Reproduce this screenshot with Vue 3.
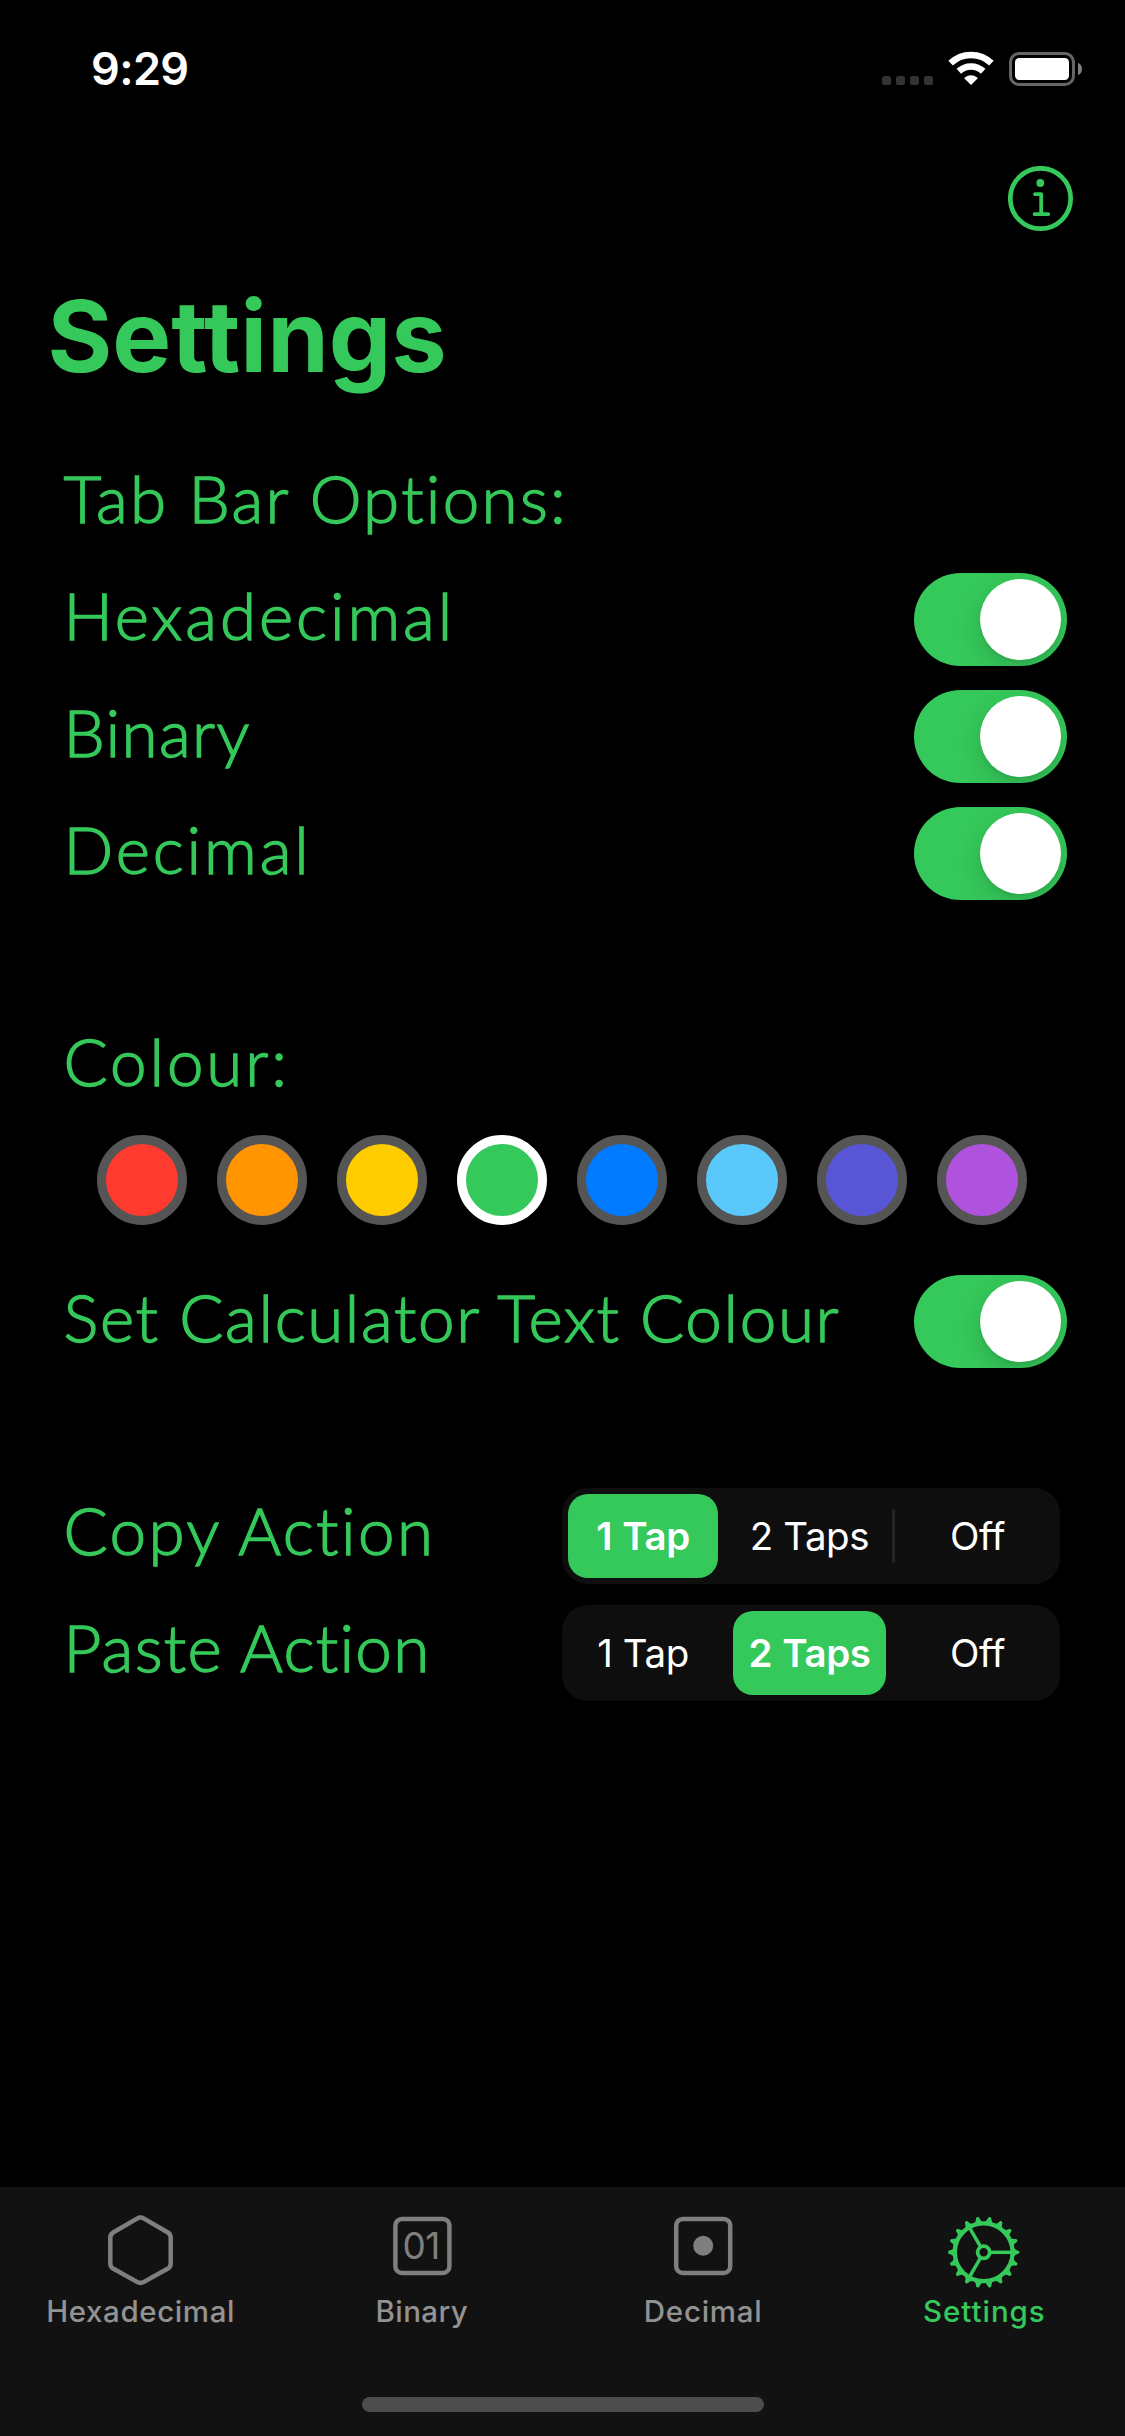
<script setup>
import { ref } from 'vue'

const tabOptions = ref([
  { label: 'Hexadecimal', spacing: 2.95, on: true },
  { label: 'Binary', spacing: 1.4, on: true },
  { label: 'Decimal', spacing: 2.9, on: true },
])

const colours = ['#ff3b30', '#ff9500', '#ffcc00', '#35c85a', '#007aff', '#5ac8fa', '#5856d6', '#af52de']
const selectedColour = ref(3)
const textColourOn = ref(true)

const choices = ['1 Tap', '2 Taps', 'Off']
const actions = ref([
  { label: 'Copy Action', spacing: 2.45, selected: 0 },
  { label: 'Paste Action', spacing: 1.35, selected: 1 },
])

const tabs = [
  { id: 'hex', label: 'Hexadecimal', spacing: 0.6 },
  { id: 'bin', label: 'Binary', spacing: 0.4 },
  { id: 'dec', label: 'Decimal', spacing: 0.75 },
  { id: 'set', label: 'Settings', spacing: 0.95 },
]
const activeTab = ref('set')

// Eighteen gear teeth, one every 20 degrees
const teeth = Array.from({ length: 18 }, (_, i) => i * 20)
const spokes = [0, 120, 240]

// A separator is visible only between two unselected segments
const separatorHidden = (selected, i) => selected === i || selected === i + 1
</script>

<template>
  <div class="screen">
    <header class="status">
      <span class="time">9:29</span>
      <svg class="status-icons" width="201" height="36" viewBox="0 0 201 36">
        <g fill="#333">
          <rect x="0" y="25" width="9" height="9" rx="2.6" />
          <rect x="14" y="25" width="9" height="9" rx="2.6" />
          <rect x="28" y="25" width="9" height="9" rx="2.6" />
          <rect x="42" y="25" width="9" height="9" rx="2.6" />
        </g>
        <g fill="none" stroke="#fff" stroke-width="6.6">
          <path d="M68.6 12.2A29.3 29.3 0 0 1 109.4 12.2" />
          <path d="M76.8 20.2A18 18 0 0 1 101.2 20.2" />
        </g>
        <path d="M89 34L82.5 27.4Q82.3 26.9 82.8 26.5Q89 22.2 95.2 26.5Q95.7 26.9 95.5 27.4Z" fill="#fff" />
        <rect x="128.5" y="2.5" width="63" height="31" rx="8.5" fill="none" stroke="#666" stroke-width="3" />
        <rect x="133" y="7" width="54" height="22" rx="4.2" fill="#fff" />
        <path d="M196 11.7Q200 13.8 200 18Q200 22.2 196 24.3Z" fill="#808080" />
      </svg>
    </header>

    <nav class="nav">
      <button class="info" aria-label="Info">
        <svg width="66" height="66" viewBox="0 0 66 66">
          <circle cx="32.5" cy="32.5" r="30.2" fill="none" stroke="#35c85a" stroke-width="4.7" />
          <circle cx="32.3" cy="17" r="3.9" fill="#35c85a" />
          <path d="M27 28.2H33.2V48.2M26.6 48.2H40.2" fill="none" stroke="#35c85a" stroke-width="3.8" stroke-linecap="round" stroke-linejoin="round" />
        </svg>
      </button>
    </nav>

    <h1 class="title">Settings</h1>

    <section class="group">
      <div class="row"><span class="label" style="letter-spacing: 2.3px">Tab Bar Options:</span></div>
      <div v-for="o in tabOptions" :key="o.label" class="row">
        <span class="label" :style="{ letterSpacing: o.spacing + 'px' }">{{ o.label }}</span>
        <button class="toggle" :class="{ on: o.on }" :aria-label="o.label" @click="o.on = !o.on"><i class="knob"></i></button>
      </div>
    </section>

    <section class="group colour-group">
      <div class="row"><span class="label" style="letter-spacing: 2.9px">Colour:</span></div>
      <div class="swatches">
        <button
          v-for="(c, i) in colours"
          :key="c"
          class="swatch"
          :class="{ selected: selectedColour === i }"
          :style="{ backgroundColor: c }"
          :aria-label="c"
          @click="selectedColour = i"
        ></button>
      </div>
      <div class="row">
        <span class="label" style="letter-spacing: 1.67px">Set Calculator Text Colour</span>
        <button class="toggle" :class="{ on: textColourOn }" aria-label="Text colour" @click="textColourOn = !textColourOn"><i class="knob"></i></button>
      </div>
    </section>

    <section class="group action-group">
      <div v-for="a in actions" :key="a.label" class="row action-row">
        <span class="label" :style="{ letterSpacing: a.spacing + 'px' }">{{ a.label }}</span>
        <div class="segmented">
          <template v-for="(choice, i) in choices" :key="choice">
            <button class="segment" :class="['seg-' + i, { selected: a.selected === i }]" @click="a.selected = i">{{ choice }}</button>
            <i v-if="i < 2" class="separator" :class="{ hidden: separatorHidden(a.selected, i) }"></i>
          </template>
        </div>
      </div>
    </section>

    <footer class="tabbar">
      <div class="tabs">
        <button v-for="t in tabs" :key="t.id" class="tab" :class="{ active: activeTab === t.id }" @click="activeTab = t.id">
          <svg width="100" height="106" viewBox="0 0 100 106" fill="none" stroke="currentColor" stroke-width="4.5">
            <path
              v-if="t.id === 'hex'"
              d="M46 31.6Q49.5 29.6 53 31.6L76.5 45.2Q79.7 47 79.7 50.6V76.4Q79.7 80 76.5 81.8L53 94.9Q49.5 96.9 46 94.9L22.5 81.8Q19.3 80 19.3 76.4V50.6Q19.3 47 22.5 45.2Z"
            />
            <template v-else-if="t.id === 'bin'">
              <rect x="23.4" y="31.9" width="54" height="54" rx="6.5" />
              <text x="30.6" y="72.2" class="digits">01</text>
            </template>
            <template v-else-if="t.id === 'dec'">
              <rect x="23.2" y="31.9" width="54" height="54" rx="6.5" />
              <circle cx="50.2" cy="58.8" r="10" fill="currentColor" stroke="none" />
            </template>
            <g v-else transform="translate(49.7 65.3)">
              <circle r="28.9" stroke-width="4.3" />
              <circle r="6.1" stroke-width="3.8" />
              <path
                v-for="a in teeth"
                :key="'t' + a"
                d="M30 -4.2Q31.5 -2.2 35 -1.5Q36.6 0 35 1.5Q31.5 2.2 30 4.2Z"
                fill="currentColor"
                stroke="none"
                :transform="`rotate(${a})`"
              />
              <path v-for="a in spokes" :key="'s' + a" d="M7 0H29" stroke-width="3.5" :transform="`rotate(${a})`" />
            </g>
          </svg>
          <span class="tab-label" :style="{ letterSpacing: t.spacing + 'px' }">{{ t.label }}</span>
        </button>
      </div>
      <div class="home-indicator"></div>
    </footer>
  </div>
</template>

<style>
body {
  background: #000;
}
</style>

<style scoped>
.screen {
  display: flex;
  flex-direction: column;
  width: 1125px;
  height: 2436px;
  overflow: hidden;
  background: #000;
  color: #35c85a;
  font-family: Inter, 'Liberation Sans', sans-serif;
}

button {
  padding: 0;
  border: 0;
  background: none;
  color: inherit;
  font: inherit;
}

.status {
  display: flex;
  justify-content: space-between;
  align-items: center;
  height: 137px;
  padding: 0 42px 0 91px;
  color: #fff;
}

.time {
  font-size: 45px;
  font-weight: 600;
  letter-spacing: -0.6px;
}

.status-icons {
  display: block;
}

.nav {
  display: flex;
  justify-content: flex-end;
  align-items: center;
  height: 123px;
  padding-right: 51px;
}

.info,
.info svg {
  display: block;
}

.title {
  margin: 16px 0 0 47.5px;
  font-size: 99px;
  line-height: 120px;
  font-weight: 700;
}

.group {
  display: flex;
  flex-direction: column;
  margin-top: 48px;
}

.colour-group {
  margin-top: 95px;
}

.action-group {
  margin-top: 97px;
}

.row {
  display: flex;
  justify-content: space-between;
  align-items: center;
  height: 117px;
  padding: 0 58px 0 63.5px;
}

.action-row {
  padding-right: 65px;
}

.label {
  padding-bottom: 9px;
  font-family: Lato, 'Open Sans', sans-serif;
  font-size: 65.5px;
  line-height: 80px;
  font-weight: 300;
  white-space: nowrap;
  -webkit-text-stroke: 1.4px currentColor;
}

.action-row .label {
  padding-bottom: 11px;
}

.toggle {
  display: flex;
  align-items: center;
  width: 153px;
  height: 93px;
  padding: 0 6px;
  border-radius: 46.5px;
  background: #39393d;
  overflow: hidden;
}

.toggle.on {
  justify-content: flex-end;
  background: #35c85a;
}

.knob {
  width: 81px;
  height: 81px;
  border-radius: 50%;
  background: #fff;
  box-shadow: 0 9px 24px rgba(0, 0, 0, 0.15), 0 3px 3px rgba(0, 0, 0, 0.05);
}

.swatches {
  display: flex;
  gap: 30px;
  padding: 11px 97px 38px;
}

.swatch {
  box-sizing: border-box;
  width: 90px;
  height: 90px;
  border: 9px solid #555;
  border-radius: 50%;
}

.swatch.selected {
  border-color: #fff;
}

.segmented {
  display: flex;
  align-items: center;
  gap: 6px;
  box-sizing: border-box;
  width: 498px;
  height: 96px;
  padding: 6px;
  border-radius: 26px;
  background: #0e0e0e;
}

.segment {
  width: 153px;
  height: 84px;
  border-radius: 20px;
  color: #fff;
  font-size: 38.5px;
  letter-spacing: -0.4px;
}

.seg-0 {
  width: 150px;
}

.segment.selected {
  background: #35c85a;
  font-weight: 600;
  letter-spacing: -0.4px;
  word-spacing: 1px;
}

.separator {
  width: 3px;
  height: 54px;
  border-radius: 1.5px;
  background: #242424;
}

.separator.hidden {
  background: transparent;
}

.tabbar {
  display: flex;
  flex-direction: column;
  align-items: center;
  height: 249px;
  margin-top: auto;
  background: #121212;
}

.tabs {
  display: grid;
  grid-template-columns: repeat(4, 1fr);
  width: 100%;
}

.tab {
  display: flex;
  flex-direction: column;
  align-items: center;
  color: #7f7f7f;
}

.tab svg {
  display: block;
}

.tab-label {
  color: #929292;
  font-size: 29.5px;
  line-height: 37px;
  font-weight: 500;
}

.tab.active,
.tab.active .tab-label {
  color: #35c85a;
}

.digits {
  fill: currentColor;
  stroke: none;
  font-family: Inter, sans-serif;
  font-size: 37px;
  letter-spacing: -0.6px;
}

.home-indicator {
  width: 402px;
  height: 15px;
  margin-top: 67px;
  border-radius: 7.5px;
  background: #4d4d4d;
}
</style>
